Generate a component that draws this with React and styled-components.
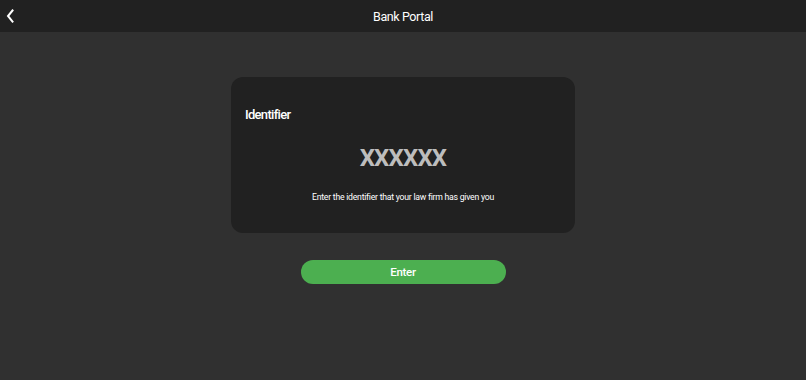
import React from "react";
import styled, { createGlobalStyle } from "styled-components";

const Global = createGlobalStyle`
  html, body { margin: 0; padding: 0; background: #303030; }
  body { font-family: Roboto, "Noto Sans", sans-serif; }
  * { box-sizing: border-box; }
`;

const Page = styled.div`
  width: 806px;
  height: 380px;
  background: #303030;
  display: flex;
  flex-direction: column;
`;

const Header = styled.header`
  height: 32px;
  background: #212121;
  display: flex;
  align-items: center;
  justify-content: center;
  position: relative;
`;

const BackButton = styled.button`
  position: absolute;
  left: 0;
  top: 4px;
  width: 20px;
  height: 24px;
  padding: 0;
  border: none;
  background: transparent;
  display: flex;
  align-items: center;
  justify-content: center;
`;

const Title = styled.h1`
  margin: 0;
  color: #ffffff;
  font-size: 12.5px;
  font-weight: 400;
  letter-spacing: -0.4px;
`;

const Main = styled.main`
  display: flex;
  flex-direction: column;
  align-items: center;
  padding-top: 45px;
`;

const Card = styled.section`
  width: 344px;
  height: 156px;
  background: #212121;
  border-radius: 12px;
  padding: 30px 14px 0;
  display: flex;
  flex-direction: column;
`;

const CardTitle = styled.h2`
  margin: 0;
  color: #ffffff;
  font-size: 13px;
  font-weight: 500;
  line-height: 16px;
  letter-spacing: -0.7px;
`;

const Code = styled.div`
  margin-top: 21px;
  text-align: center;
  color: #bdbdbd;
  font-size: 24px;
  font-weight: 700;
  line-height: 28px;
  letter-spacing: -0.8px;
`;

const Hint = styled.p`
  margin: 19px 0 0;
  text-align: center;
  color: #ffffff;
  font-size: 8.7px;
  line-height: 12px;
  letter-spacing: -0.25px;
`;

const EnterButton = styled.button`
  margin-top: 27px;
  width: 205px;
  height: 24px;
  border: none;
  border-radius: 12px;
  background: #4caf50;
  color: #ffffff;
  font-family: Roboto, "Noto Sans", sans-serif;
  font-size: 11.5px;
  font-weight: 500;
  letter-spacing: -0.3px;
  padding: 0;
`;

export default function App() {
  return (
    <>
      <Global />
      <Page>
        <Header>
          <BackButton aria-label="Back">
            <svg width="12" height="16" viewBox="0 0 12 16">
              <path d="M8.5 2.5 L4 8 L8.5 13.5" fill="none" stroke="#fff" strokeWidth="2" strokeLinecap="square" />
            </svg>
          </BackButton>
          <Title>Bank Portal</Title>
        </Header>
        <Main>
          <Card>
            <CardTitle>Identifier</CardTitle>
            <Code>XXXXXX</Code>
            <Hint>Enter the identifier that your law firm has given you</Hint>
          </Card>
          <EnterButton>Enter</EnterButton>
        </Main>
      </Page>
    </>
  );
}
